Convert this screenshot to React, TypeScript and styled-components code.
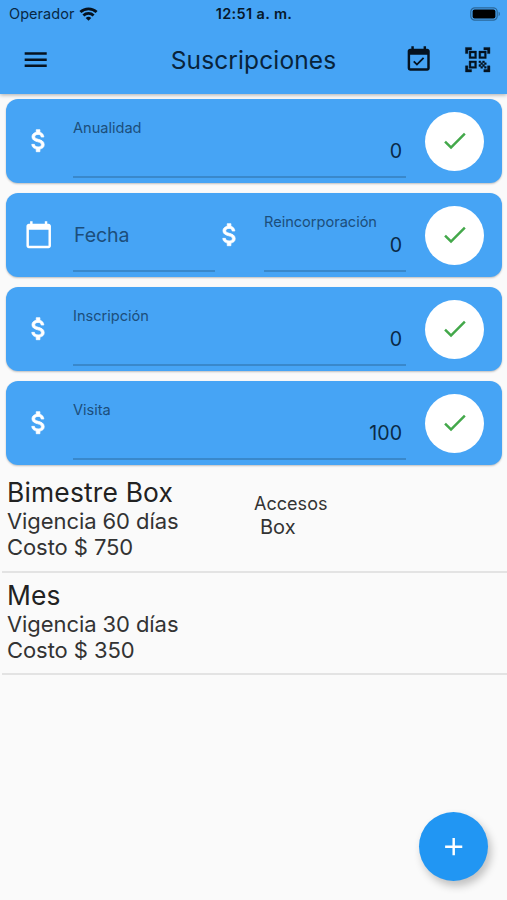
import React from 'react';
import styled, { createGlobalStyle } from 'styled-components';
import {
  MdAdd,
  MdAttachMoney,
  MdCalendarToday,
  MdCheck,
  MdEventAvailable,
  MdMenu,
  MdQrCodeScanner,
} from 'react-icons/md';

const GlobalStyle = createGlobalStyle`
  * { box-sizing: border-box; }
  body {
    margin: 0;
    background: #fafafa;
    font-family: Inter, "Liberation Sans", sans-serif;
    color: #262626;
  }
  button {
    font: inherit;
    border: 0;
    padding: 0;
    background: none;
    color: inherit;
  }
  svg { display: block; flex: none; }
`;

const Screen = styled.div`
  position: relative;
  height: 900px;
  overflow: hidden;
  background: #fafafa;
`;

const Header = styled.header`
  height: 94px;
  background: #46a4f5;
  box-shadow: 0 1px 4px rgba(0, 0, 0, 0.32);
`;

const StatusBar = styled.div`
  display: grid;
  grid-template-columns: 1fr auto 1fr;
  align-items: center;
  height: 27px;
  padding: 0 6px 0 9px;
`;

const Carrier = styled.div`
  display: flex;
  align-items: center;
  gap: 5px;
  font-size: 14.5px;
  letter-spacing: 0.05px;
  color: #082844;
`;

const Clock = styled.time`
  margin-right: 2px;
  font-size: 14.5px;
  font-weight: 600;
  letter-spacing: 0.35px;
  color: #06182a;
`;

const BatterySlot = styled.div`
  display: flex;
  justify-content: flex-end;
`;

const Toolbar = styled.div`
  display: grid;
  grid-template-columns: 1fr auto 1fr;
  align-items: center;
  height: 66px;
  padding: 0 15px;
  color: #05121f;
`;

const MenuButton = styled.button`
  padding-left: 5.5px;
`;

const Title = styled.h1`
  margin: 0;
  font-size: 24.5px;
  font-weight: 400;
  line-height: 30px;
  letter-spacing: 0.12px;
  color: #08233b;
`;

const Actions = styled.div`
  display: flex;
  justify-content: flex-end;
  gap: 29px;
`;

const ScanIcon = styled(MdQrCodeScanner)`
  path:not([fill='none']) {
    stroke: currentColor;
    stroke-width: 0.3px;
  }
`;

const Cards = styled.section`
  display: flex;
  flex-direction: column;
  gap: 10px;
  padding: 5px 5px 0 6px;
`;

const Card = styled.form`
  display: flex;
  height: 84px;
  padding: 0 18px 0 17px;
  align-items: center;
  border-radius: 12px;
  background: #46a4f5;
  box-shadow: 0 1px 2px rgba(0, 0, 0, 0.24);
  color: #fff;
`;

const Lead = styled.div`
  display: flex;
  width: 50px;
  padding-left: 1px;
`;

const Separator = styled.div`
  display: flex;
  width: 49px;
`;

const Currency = styled(MdAttachMoney)`
  path:not([fill='none']) {
    stroke: currentColor;
    stroke-width: 0.6px;
  }
`;

const Field = styled.label<{ $width?: number }>`
  display: flex;
  flex-direction: column;
  flex: ${(p) => (p.$width ? `0 0 ${p.$width}px` : '1')};
  height: 78px;
  margin-bottom: 4px;
  padding-top: 17px;
  border-bottom: 2px solid #3988cb;
`;

const Label = styled.span`
  font-size: 14.6px;
  line-height: 22px;
  letter-spacing: -0.02px;
  color: #1c4e7b;
`;

const Placeholder = styled.span`
  padding: 12px 0 0 1px;
  font-size: 19.6px;
  line-height: 24px;
  letter-spacing: -0.1px;
  color: #1c4e7b;
`;

const Value = styled.span`
  padding-right: 4px;
  font-size: 19.6px;
  line-height: 25px;
  text-align: right;
  color: #0a2a47;
`;

const Confirm = styled.button`
  display: flex;
  align-items: center;
  justify-content: center;
  width: 59px;
  height: 59px;
  margin-left: 19px;
  border-radius: 50%;
  background: #fff;
  color: #43a84a;
`;

const Plans = styled.ul`
  display: flex;
  flex-direction: column;
  margin: 0;
  padding: 12px 0 0 2px;
  list-style: none;
`;

const Plan = styled.li`
  display: grid;
  grid-template-columns: 247px 1fr;
  height: 102.4px;
  padding-left: 5px;
  border-bottom: 2px solid #e3e3e3;

  & + & { padding-top: 7px; }
  &:first-child { height: 96px; }
`;

const PlanName = styled.div`
  font-size: 26.4px;
  line-height: 31px;
  letter-spacing: 0.18px;
  color: #222;
`;

const PlanDetail = styled.div`
  font-size: 22px;
  line-height: 26px;
  letter-spacing: -0.08px;
  color: #333;
`;

const Access = styled.div`
  padding-top: 15px;
  color: #333;
`;

const AccessTitle = styled.div`
  font-size: 18px;
  line-height: 24px;
  letter-spacing: 0.03px;
`;

const AccessItem = styled.div`
  padding-left: 6px;
  font-size: 20px;
  line-height: 23px;
`;

const AddButton = styled.button`
  position: absolute;
  right: 19px;
  bottom: 19px;
  display: flex;
  align-items: center;
  justify-content: center;
  width: 69px;
  height: 69px;
  border-radius: 50%;
  background: #2196f3;
  color: #fff;
  box-shadow: 3px 5px 8px rgba(0, 0, 0, 0.24);
`;

const ICON = 29.4;

function WifiIcon() {
  return (
    <svg width="19" height="14" viewBox="0 0 18 14" fill="none" stroke="#05121f" strokeWidth="2.8">
      <path d="M0.9 5.1a11.6 11.6 0 0 1 16.2 0" />
      <path d="M3.9 8.5a7.3 7.3 0 0 1 10.2 0" />
      <path d="M9 13.8 6.2 11a4.2 4.2 0 0 1 5.6 0z" fill="#05121f" stroke="none" />
    </svg>
  );
}

function BatteryIcon() {
  return (
    <svg width="31" height="14" viewBox="0 0 31 14">
      <rect x="0.8" y="0.8" width="26.4" height="12.4" rx="4" fill="none" stroke="#2b6799" strokeWidth="1.2" />
      <rect x="2.6" y="2.5" width="22.8" height="9" rx="2" fill="#000" />
      <path d="M28.6 4.8c1.7.5 1.7 3.9 0 4.4z" fill="#2b6799" />
    </svg>
  );
}

function ConfirmButton() {
  return (
    <Confirm type="button" aria-label="Confirmar">
      <MdCheck size={ICON} />
    </Confirm>
  );
}

function PriceCard({ label, value }: { label: string; value: string }) {
  return (
    <Card>
      <Lead>
        <Currency size={ICON} />
      </Lead>
      <Field>
        <Label>{label}</Label>
        <Value>{value}</Value>
      </Field>
      <ConfirmButton />
    </Card>
  );
}

function RejoinCard() {
  return (
    <Card>
      <Lead>
        <MdCalendarToday size={ICON} />
      </Lead>
      <Field $width={142}>
        <Placeholder>Fecha</Placeholder>
      </Field>
      <Separator>
        <Currency size={ICON} />
      </Separator>
      <Field>
        <Label>Reincorporación</Label>
        <Value>0</Value>
      </Field>
      <ConfirmButton />
    </Card>
  );
}

const plans = [
  { name: 'Bimestre Box', days: 60, cost: 750, access: ['Box'] },
  { name: 'Mes', days: 30, cost: 350, access: [] as string[] },
];

export default function App() {
  return (
    <Screen>
      <GlobalStyle />
      <Header>
        <StatusBar>
          <Carrier>
            Operador
            <WifiIcon />
          </Carrier>
          <Clock>12:51 a. m.</Clock>
          <BatterySlot>
            <BatteryIcon />
          </BatterySlot>
        </StatusBar>
        <Toolbar>
          <MenuButton type="button" aria-label="Menú">
            <MdMenu size={ICON} />
          </MenuButton>
          <Title>Suscripciones</Title>
          <Actions>
            <MdEventAvailable size={ICON} />
            <ScanIcon size={ICON} />
          </Actions>
        </Toolbar>
      </Header>
      <Cards>
        <PriceCard label="Anualidad" value="0" />
        <RejoinCard />
        <PriceCard label="Inscripción" value="0" />
        <PriceCard label="Visita" value="100" />
      </Cards>
      <Plans>
        {plans.map((plan) => (
          <Plan key={plan.name}>
            <div>
              <PlanName>{plan.name}</PlanName>
              <PlanDetail>Vigencia {plan.days} días</PlanDetail>
              <PlanDetail>Costo $ {plan.cost}</PlanDetail>
            </div>
            {plan.access.length > 0 && (
              <Access>
                <AccessTitle>Accesos</AccessTitle>
                {plan.access.map((item) => (
                  <AccessItem key={item}>{item}</AccessItem>
                ))}
              </Access>
            )}
          </Plan>
        ))}
      </Plans>
      <AddButton type="button" aria-label="Agregar">
        <MdAdd size={ICON} />
      </AddButton>
    </Screen>
  );
}
